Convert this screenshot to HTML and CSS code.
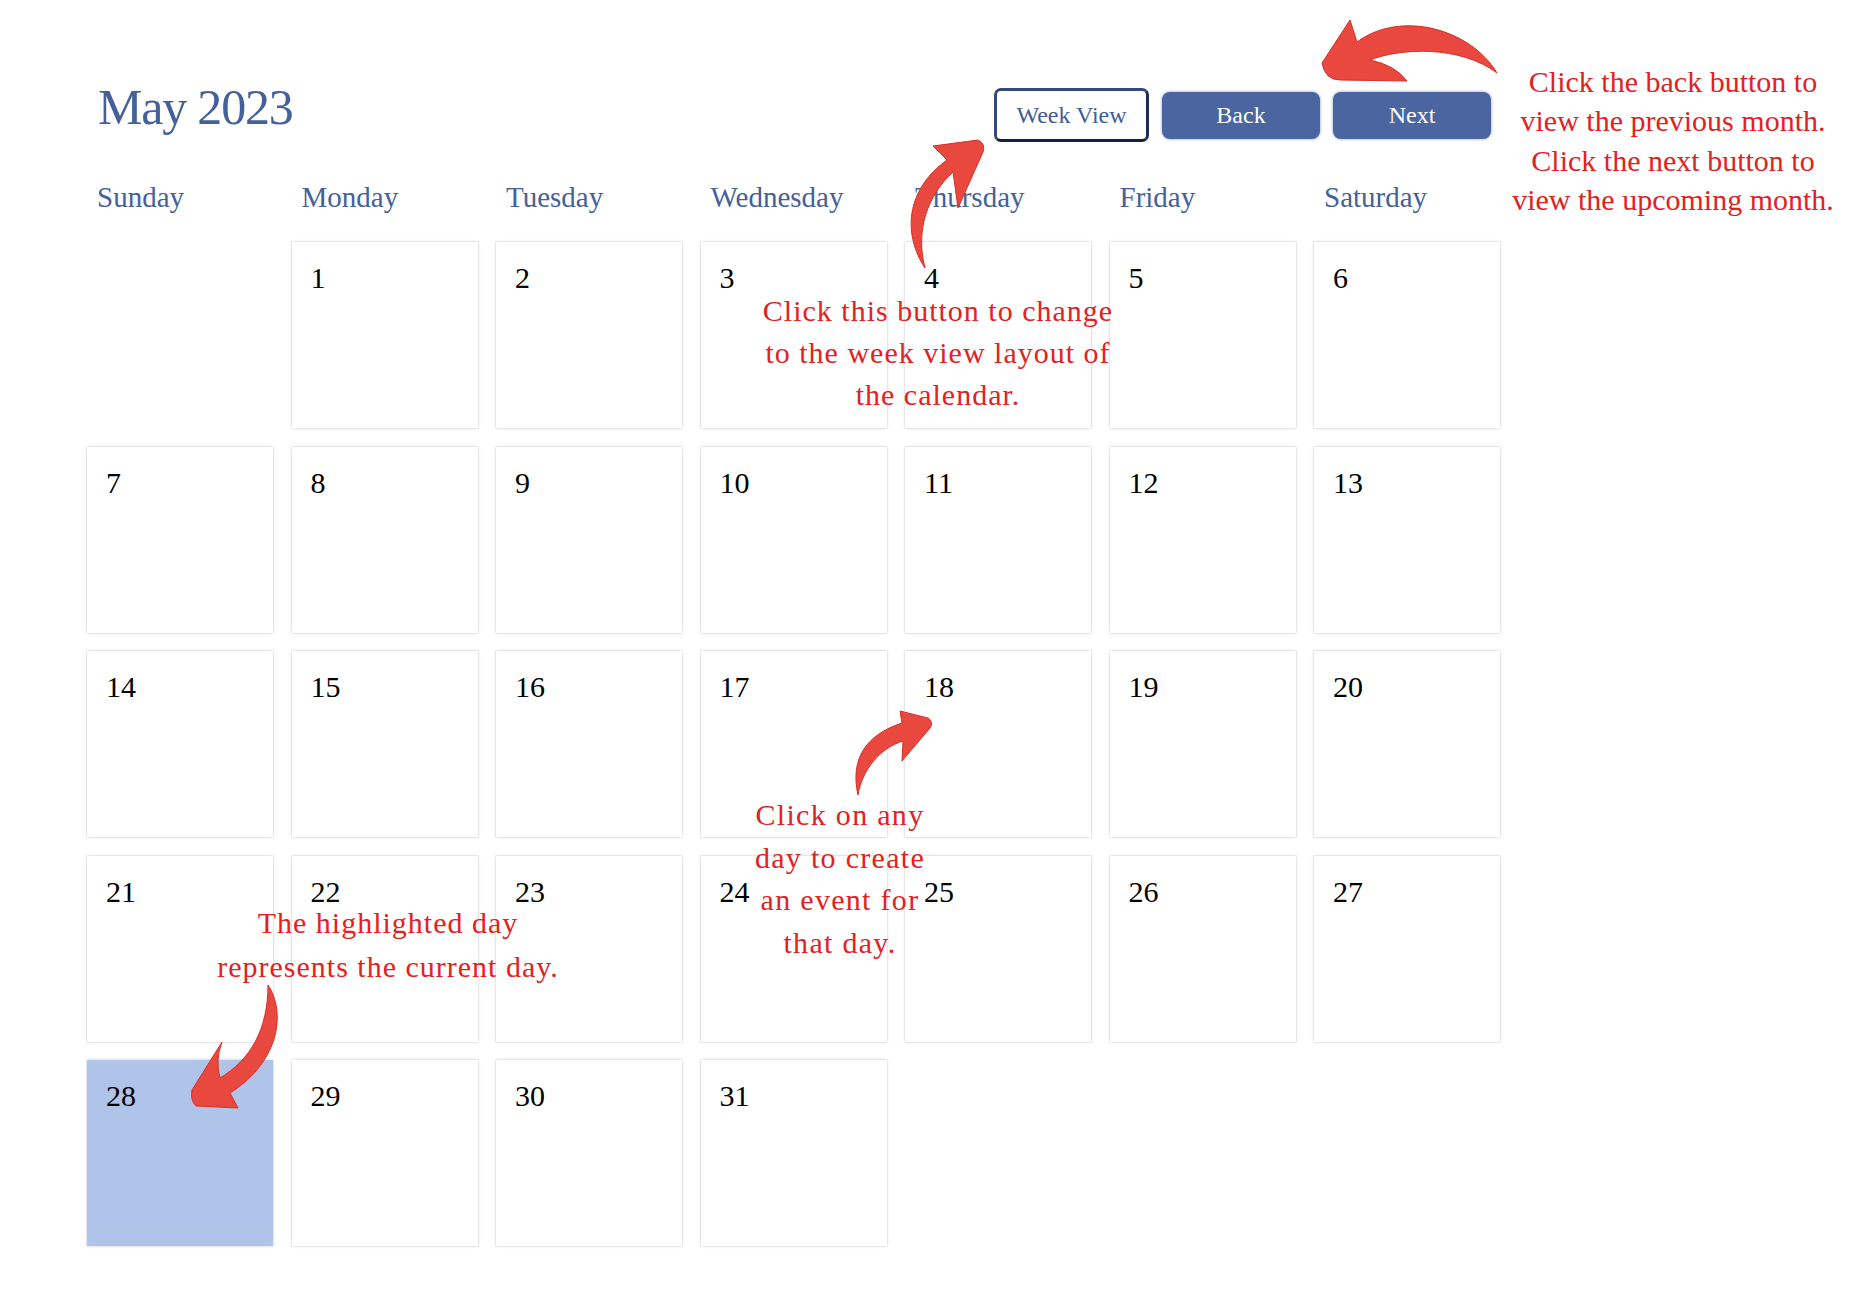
FILE: index.html
```html
<!DOCTYPE html>
<html lang="en">
<head>
<meta charset="utf-8">
<title>May 2023</title>
<link rel="stylesheet" href="styles.css">
</head>
<body>
<div class="page">
  <header class="cal-header">
    <h1 class="title">May 2023</h1>
    <div class="actions">
      <button class="btn btn-outline">Week View</button>
      <button class="btn btn-solid">Back</button>
      <button class="btn btn-solid">Next</button>
    </div>
  </header>
  <div class="weekdays">
    <div class="weekday">Sunday</div>
    <div class="weekday">Monday</div>
    <div class="weekday">Tuesday</div>
    <div class="weekday">Wednesday</div>
    <div class="weekday">Thursday</div>
    <div class="weekday">Friday</div>
    <div class="weekday">Saturday</div>
  </div>
  <div class="days">
    <div class="empty"></div>
    <div class="day">1</div>
    <div class="day">2</div>
    <div class="day">3</div>
    <div class="day">4</div>
    <div class="day">5</div>
    <div class="day">6</div>
    <div class="day">7</div>
    <div class="day">8</div>
    <div class="day">9</div>
    <div class="day">10</div>
    <div class="day">11</div>
    <div class="day">12</div>
    <div class="day">13</div>
    <div class="day">14</div>
    <div class="day">15</div>
    <div class="day">16</div>
    <div class="day">17</div>
    <div class="day">18</div>
    <div class="day">19</div>
    <div class="day">20</div>
    <div class="day">21</div>
    <div class="day">22</div>
    <div class="day">23</div>
    <div class="day">24</div>
    <div class="day">25</div>
    <div class="day">26</div>
    <div class="day">27</div>
    <div class="day today">28</div>
    <div class="day">29</div>
    <div class="day">30</div>
    <div class="day">31</div>
  </div>
</div>

<div class="overlay">
  <div class="note note-nav">Click the back button to<br>view the previous month.<br>Click the next button to<br>view the upcoming month.</div>
  <div class="note note-week">Click this button to change<br>to the week view layout of<br>the calendar.</div>
  <div class="note note-day">Click on any<br>day to create<br>an event for<br>that day.</div>
  <div class="note note-today">The highlighted day<br>represents the current day.</div>
  <svg class="arrows" width="1868" height="1304" viewBox="0 0 1868 1304" xmlns="http://www.w3.org/2000/svg">
    <path class="arrow" d="M1497,73 C1470,28 1400,10 1357,42 L1350,20 L1322,63 Q1325,80 1340,80 L1407,81 Q1395,65 1370,60 C1400,48 1460,45 1497,73 Z"/>
    <path class="arrow" d="M925,268 C903,235 905,190 947,160 L933,146 L978,140 Q986,144 983,152 L958,208 L953,172 C928,195 915,230 925,268 Z"/>
    <path class="arrow" d="M858,795 C850,760 865,735 902,723 L900,711 L928,718 Q934,722 930,728 L902,761 L903,741 C880,748 862,770 858,795 Z"/>
    <path class="arrow" d="M268,985 C285,1010 282,1060 230,1093 L238,1108 L196,1106 Q190,1100 192,1090 L222,1042 Q215,1060 220,1078 C250,1060 268,1030 268,985 Z"/>
  </svg>
</div>
</body>
</html>
```

FILE: styles.css
```css
body {
  margin: 0;
  background: #ffffff;
  font-family: "Liberation Serif", "Times New Roman", serif;
}

.page {
  width: 1413px;
  padding: 77px 0 0 87px;
}

.cal-header {
  display: flex;
  justify-content: space-between;
  align-items: flex-start;
  padding: 0 9px 0 11px;
}

.title {
  margin: 0;
  font-size: 50px;
  line-height: 60px;
  font-weight: normal;
  letter-spacing: -1.2px;
  color: #44619b;
}

.actions {
  display: flex;
  align-items: center;
  gap: 13px;
  margin-top: 11px;
}

.btn {
  font-family: inherit;
  font-size: 24px;
  padding: 0;
  cursor: pointer;
}

.btn-outline {
  width: 155px;
  height: 54px;
  background: #ffffff;
  color: #3f5c98;
  border: 3px solid #33487f;
  border-right-color: #1f2c5a;
  border-bottom-color: #151f47;
  border-radius: 7px;
}

.btn-solid {
  width: 158px;
  height: 47px;
  background: #4a65a0;
  color: #ffffff;
  border: none;
  border-radius: 8px;
  box-shadow: 0 0 3px rgba(74, 101, 160, 0.7);
}

.weekdays {
  display: grid;
  grid-template-columns: repeat(7, 186px);
  column-gap: 18.5px;
  margin-top: 37px;
}

.weekday {
  padding-left: 10px;
  font-size: 29px;
  line-height: 36px;
  color: #44619b;
}

.days {
  display: grid;
  grid-template-columns: repeat(7, 186px);
  grid-auto-rows: 186px;
  gap: 18.5px;
  margin-top: 27px;
  padding-bottom: 20px;
}

.day {
  box-sizing: border-box;
  padding: 19px 19px;
  background: #ffffff;
  box-shadow: 0 0 0 1px rgba(0, 0, 0, 0.035), 0 0 3px rgba(0, 0, 0, 0.16);
  font-size: 30px;
  line-height: 34px;
  color: #000000;
}

.day.today {
  background: #b0c4ea;
}

.overlay {
  position: absolute;
  left: 0;
  top: 0;
  width: 1868px;
  height: 1304px;
  pointer-events: none;
}

.note {
  position: absolute;
  font-size: 30px;
  text-align: center;
  color: #e3211f;
}

.note-nav {
  left: 1493px;
  top: 62px;
  width: 360px;
  line-height: 39.3px;
}

.note-week {
  left: 738px;
  top: 290px;
  width: 400px;
  line-height: 42px;
  letter-spacing: 1px;
}

.note-day {
  left: 730px;
  top: 794px;
  width: 220px;
  line-height: 42.7px;
  letter-spacing: 1.3px;
}

.note-today {
  left: 188px;
  top: 901px;
  width: 400px;
  line-height: 43.5px;
  letter-spacing: 1px;
}

.arrows {
  position: absolute;
  left: 0;
  top: 0;
}

.arrow {
  fill: #e8483e;
  stroke: #d92f27;
  stroke-width: 1;
  stroke-linejoin: round;
}
```
